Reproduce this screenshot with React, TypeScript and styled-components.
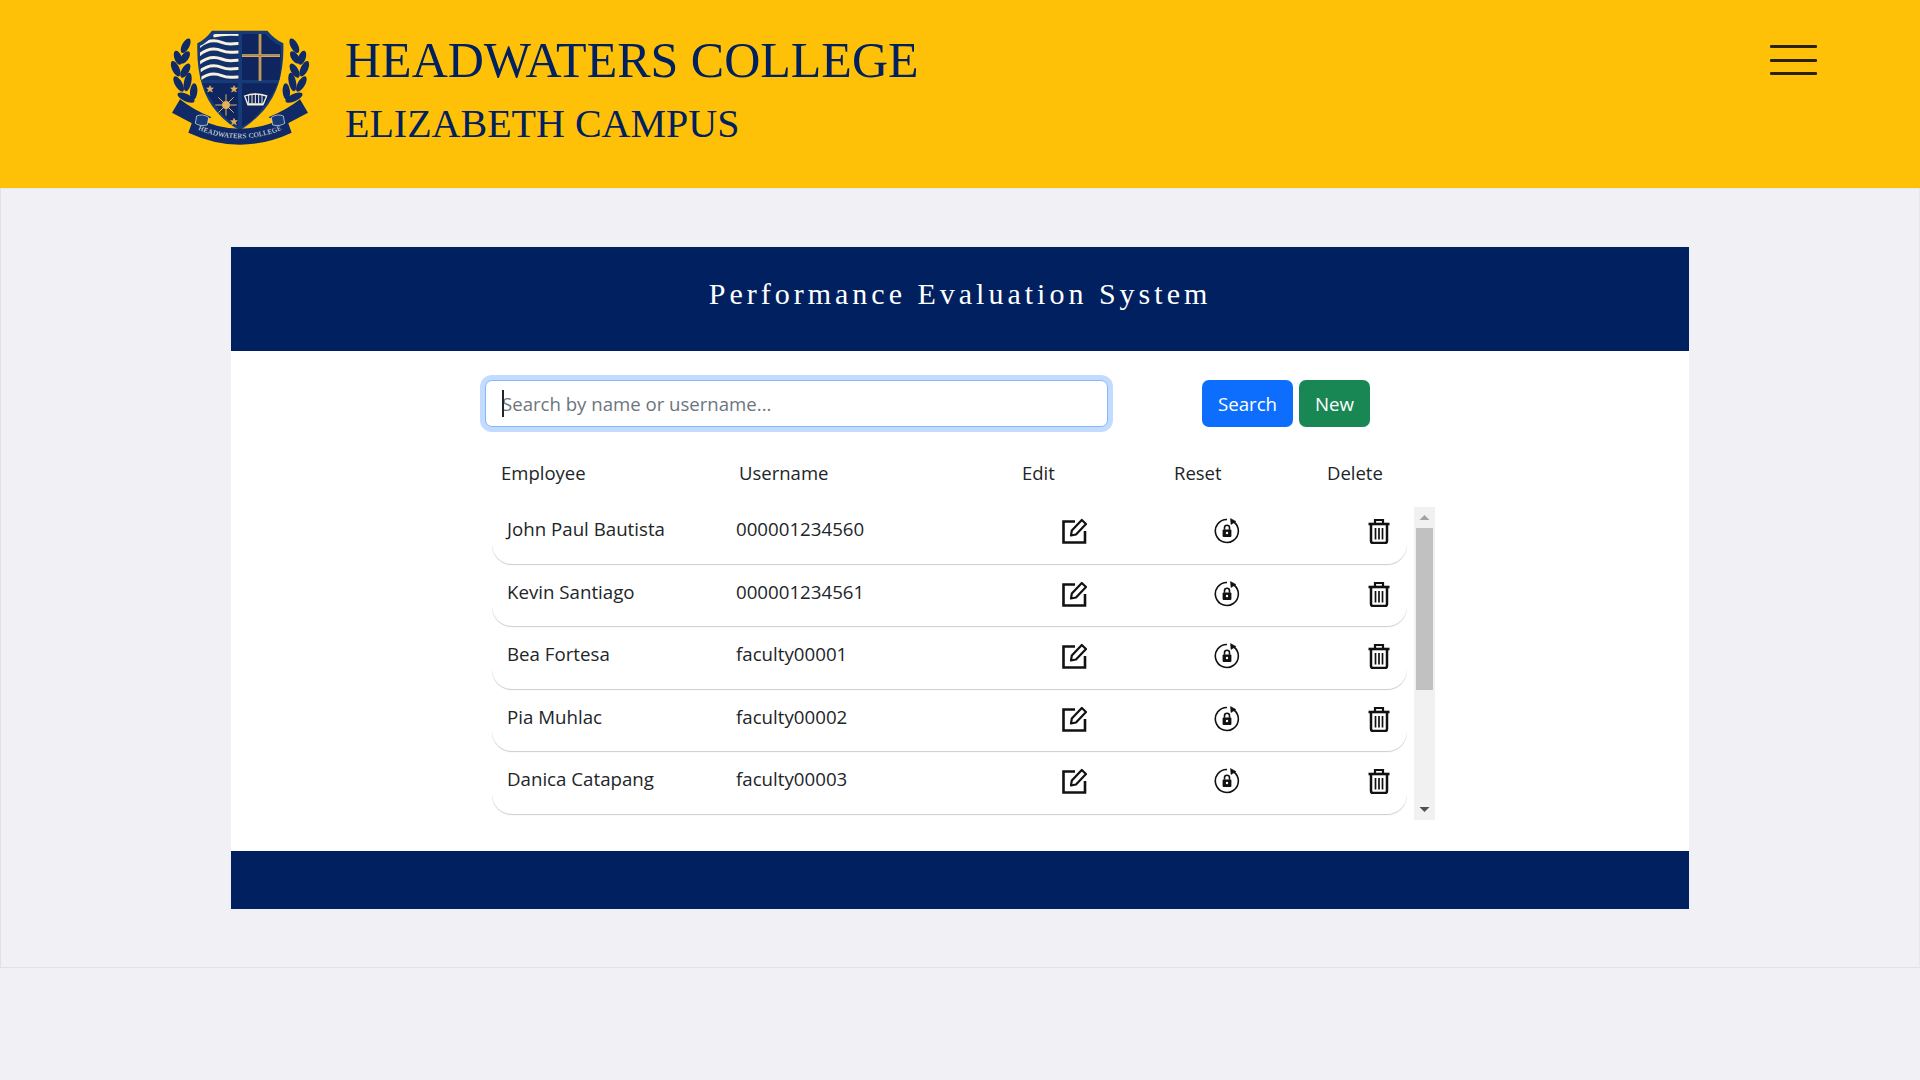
import React from "react";
import styled, { createGlobalStyle } from "styled-components";

const Global = createGlobalStyle`
  html, body { margin: 0; padding: 0; background: #f0f0f5; }
  body { font-family: "Open Sans", "Noto Sans", "Liberation Sans", sans-serif; color: #212529; }
  * { box-sizing: border-box; }
`;

const Page = styled.div`
  width: 100%;
  min-height: 100vh;
  background: #f0f0f5;
`;
const TopBar = styled.header`
  height: 188px;
  background: #ffc107;
  display: flex;
  align-items: flex-start;
  padding: 10px 103px 0 150px;
`;
const Crest = styled.svg`
  width: 180px;
  height: 150px;
  flex: none;
`;
const Titles = styled.div`
  margin-left: 15px;
  flex: 1;
  color: #002060;
  font-family: "Liberation Serif", "Times New Roman", serif;
`;
const CollegeName = styled.h1`
  margin: 22px 0 0;
  font-size: 50px;
  line-height: 56px;
  font-weight: 400;
`;
const CampusName = styled.h2`
  margin: 13px 0 0;
  font-size: 40px;
  line-height: 46px;
  font-weight: 400;
`;
const MenuButton = styled.button`
  border: 0;
  padding: 0;
  margin-top: 35px;
  background: transparent;
  width: 47px;
  height: 30px;
  display: flex;
  flex-direction: column;
  justify-content: space-between;
`;
const MenuLine = styled.span`
  display: block;
  height: 3px;
  background: #111;
  border-radius: 1px;
  opacity: 0.9;
`;
const Main = styled.main`
  height: 780px;
  border: 1px solid #dee2e6;
  border-top-color: #e8e8ec;
  border-right-color: #e8e8ec;
  padding: 58px 230px 0;
`;
const Card = styled.section`
  width: 1458px;
  background: #fff;
`;
const CardHeader = styled.div`
  height: 104px;
  background: #002060;
  color: #fff;
  font-family: "Liberation Serif", "Times New Roman", serif;
  font-size: 30px;
  letter-spacing: 4px;
  text-align: center;
  padding-top: 29px;
  line-height: 36px;
`;
const CardFooter = styled.div`
  height: 58px;
  background: #002060;
`;
const CardBody = styled.div`
  height: 500px;
  padding: 29px 0 0 254px;
`;
const SearchRow = styled.form`
  display: flex;
  align-items: center;
  height: 47px;
  margin: 0;
`;
const SearchField = styled.div`
  position: relative;
  width: 623px;
  height: 47px;
`;
const SearchInput = styled.input`
  width: 100%;
  height: 100%;
  border: 1px solid #86b7fe;
  border-radius: 7px;
  box-shadow: 0 0 0 5px rgba(13, 110, 253, 0.25);
  padding: 0 16px;
  font: inherit;
  font-size: 18.6px;
  color: #212529;
  outline: none;
  caret-color: transparent;
  &::placeholder { color: #6c757d; opacity: 1; }
`;
const Caret = styled.span`
  position: absolute;
  left: 17px;
  top: 10px;
  width: 1.5px;
  height: 27px;
  background: #212529;
`;
const ActionButton = styled.button<{ $variant: "blue" | "green" }>`
  height: 47px;
  border: 0;
  border-radius: 7px;
  padding: 0 15px;
  font: inherit;
  font-size: 18.7px;
  color: #fff;
  background: ${(p) => (p.$variant === "blue" ? "#0d6efd" : "#198754")};
`;
const SearchButton = styled(ActionButton)`
  margin-left: 94px;
  width: 91px;
`;
const NewButton = styled(ActionButton)`
  margin-left: 6px;
  width: 71px;
`;
const HeadRow = styled.div`
  display: grid;
  grid-template-columns: 238px 283px 152px 153px 1fr;
  padding-left: 16px;
  margin-top: 31px;
  height: 30px;
  line-height: 30px;
  font-size: 18.5px;
`;
const TableArea = styled.div`
  display: flex;
  margin: 19px 0 0 7px;
  width: 943px;
  height: 313px;
`;
const Scroller = styled.div`
  width: 915px;
  height: 100%;
  overflow: hidden;
`;
const List = styled.div`
  display: flex;
  flex-direction: column;
  gap: 6px;
  padding-bottom: 29px;
`;
const Scrollbar = styled.div`
  margin-left: 7px;
  width: 21px;
  height: 100%;
  background: #f1f1f1;
  display: flex;
  flex-direction: column;
  align-items: center;
`;
const ScrollArrow = styled.svg`
  flex: none;
  width: 21px;
  height: 21px;
  display: block;
`;
const ScrollTrack = styled.div`
  flex: 1;
  width: 100%;
  padding: 0 2px;
`;
const ScrollThumb = styled.div`
  height: 162px;
  background: #c1c1c1;
`;
const Row = styled.div`
  display: grid;
  grid-template-columns: 244px 262px 152px 154px 1fr;
  align-items: start;
  height: 56.5px;
  background: #fff;
  border-radius: 0 0 20px 20px;
  box-shadow: 0 1px 1px rgba(0, 0, 0, 0.2);
  font-size: 18.7px;
  line-height: 26px;
`;
const NameCell = styled.div`
  padding: 9px 0 0 15px;
`;
const UserCell = styled.div`
  padding-top: 9px;
`;
const IconCell = styled.div<{ $end?: boolean }>`
  display: flex;
  justify-content: ${(p) => (p.$end ? "flex-end" : "center")};
  padding: 11px ${(p) => (p.$end ? "15px" : "0")} 0 0;
`;
const Icon = styled.svg`
  width: 26px;
  height: 26px;
  display: block;
  fill: none;
  stroke: #111;
  stroke-width: 2;
`;

const EditIcon = () => (
  <Icon viewBox="0 0 26 26">
    <path d="M14 3.5H2.5V24.5H24V13" strokeWidth="2.6" />
    <path d="M10 17.5L10.8 12.6L20.8 2L25 6L15 16.5Z" strokeWidth="2.2" strokeLinejoin="round" />
  </Icon>
);
const ResetIcon = () => (
  <Icon viewBox="0 0 26 26">
    <path d="M20 4A11.5 11.5 0 1 1 13 1.5" strokeWidth="1.6" />
    <path d="M16.5 0.5L22 3.5L17 6.5Z" fill="#111" strokeWidth="0.5" />
    <rect x="8.6" y="11.5" width="8.8" height="7.5" rx="1" fill="#111" stroke="none" />
    <path d="M10.5 11.8V9.8a2.5 2.5 0 0 1 5 0V11.8" strokeWidth="1.6" />
    <circle cx="13" cy="15" r="1.2" fill="#fff" stroke="none" />
  </Icon>
);
const TrashIcon = () => (
  <Icon viewBox="0 0 26 26">
    <path d="M2.5 6H23.5" strokeWidth="2.6" />
    <path d="M9 5.5V2H17V5.5" strokeWidth="2.2" />
    <path d="M5 6V23a2 2 0 0 0 2 2H19a2 2 0 0 0 2-2V6" strokeWidth="2.5" />
    <path d="M9.5 10V21.5M13 10V21.5M16.5 10V21.5" strokeWidth="1.7" />
  </Icon>
);

const NAVY = "#12306b";
const CREAM = "#f8f1dc";
const GOLD = "#e3b25a";
const leaves: [number, number, number, number][] = [
  [107, 107, 28, 24], [84, 143, -20, 22], [105, 142, 35, 21], [77, 176, -25, 25],
  [106, 182, 30, 24], [86, 222, -30, 26], [113, 216, 12, 28], [131, 245, 5, 25], [108, 263, -65, 28],
];
const stripes = [85, 110, 135, 160, 185, 210];

const CrestLogo = () => (
  <Crest viewBox="0 0 540 450" role="img" aria-label="Headwaters College crest">
    <defs>
      <clipPath id="quarter"><path d="M192 72H266V212H155Q148 150 150 108Q172 98 192 72Z" /></clipPath>
      <path id="ribbonText" d="M128 352Q270 418 412 352" />
    </defs>
    {leaves.map(([x, y, r, l], i) => (
      <g key={i} fill="#0f2a66">
        <ellipse cx={x} cy={y} rx={11} ry={l} transform={`rotate(${r} ${x} ${y})`} />
        <ellipse cx={540 - x} cy={y} rx={11} ry={l} transform={`rotate(${-r} ${540 - x} ${y})`} />
      </g>
    ))}
    <path d="M186 62H352Q374 88 400 100Q404 230 340 302Q300 345 270 360Q235 345 200 305Q138 235 142 100Q166 88 186 62Z" fill="#173a78" />
    <path d="M192 72H266V210H152Q148 150 150 108Q172 98 192 72Z" fill={NAVY} />
    <path d="M276 72H346Q366 96 392 108Q394 160 388 210H276Z" fill="#0e2560" />
    <path d="M158 220H264V348Q232 335 205 298Q172 260 158 220Z" fill="#0e2560" />
    <path d="M276 220H382Q368 260 335 298Q308 335 276 348Z" fill="#0e2560" />
    <g clipPath="url(#quarter)" stroke={CREAM} strokeWidth="9" fill="none">
      {stripes.map((y) => (
        <path key={y} d={`M146 ${y + 26}C170 ${y + 6} 190 ${y + 2} 215 ${y + 12}S250 ${y + 14} 270 ${y + 16}`} />
      ))}
      <path d="M190 78Q225 70 270 74" />
    </g>
    <path d="M330 72V212M276 137H390" stroke={GOLD} strokeWidth="8" />
    <path d="M330 72V212M276 137H390" stroke="#7d6a52" strokeWidth="2" />
    <g fill={GOLD} stroke={GOLD} strokeWidth="2">
      {[[180, 237], [252, 237], [252, 335]].map(([x, y]) => (
        <path key={`${x}${y}`} d={`M${x} ${y - 10}L${x + 3} ${y - 3}L${x + 10} ${y - 3}L${x + 4} ${y + 2}L${x + 7} ${y + 9}L${x} ${y + 5}L${x - 7} ${y + 9}L${x - 4} ${y + 2}L${x - 10} ${y - 3}L${x - 3} ${y - 3}Z`} />
      ))}
      <circle cx="228" cy="285" r="11" />
      <path d="M228 253V317M196 285H260M205 262L251 308M251 262L205 308" fill="none" strokeWidth="3" />
    </g>
    <g stroke={CREAM} fill="none" strokeWidth="4">
      <path d="M284 258Q315 246 350 258L340 282H293Z" />
      <path d="M296 254V280M306 252V280M316 250V280M326 252V280M336 254V280" strokeWidth="3" />
      <path d="M292 284H340" strokeWidth="5" />
    </g>
    <g fill="#0f2a66">
      <path d="M90 268L66 308L130 342L185 322Q130 300 90 268Z" />
      <path d="M450 268L474 308L410 342L355 322Q410 300 450 268Z" />
      <path d="M132 320Q270 392 408 320L425 368Q270 440 115 368Z" />
    </g>
    <path d="M140 318Q158 310 176 322L172 345Q150 350 136 340Z" fill="#173a78" stroke={CREAM} strokeWidth="2" />
    <path d="M400 318Q382 310 364 322L368 345Q390 350 404 340Z" fill="#173a78" stroke={CREAM} strokeWidth="2" />
    <text fontFamily="'Liberation Serif', serif" fontSize="21" fill="#f4f1e8" letterSpacing="1">
      <textPath href="#ribbonText" startOffset="50%" textAnchor="middle">HEADWATERS COLLEGE</textPath>
    </text>
  </Crest>
);

const employees = [
  ["John Paul Bautista", "000001234560"],
  ["Kevin Santiago", "000001234561"],
  ["Bea Fortesa", "faculty00001"],
  ["Pia Muhlac", "faculty00002"],
  ["Danica Catapang", "faculty00003"],
];

export default function App() {
  return (
    <Page>
      <Global />
      <TopBar>
        <CrestLogo />
        <Titles>
          <CollegeName>HEADWATERS COLLEGE</CollegeName>
          <CampusName>ELIZABETH CAMPUS</CampusName>
        </Titles>
        <MenuButton aria-label="Menu">
          <MenuLine />
          <MenuLine />
          <MenuLine />
        </MenuButton>
      </TopBar>
      <Main>
        <Card>
          <CardHeader>Performance Evaluation System</CardHeader>
          <CardBody>
            <SearchRow onSubmit={(e) => e.preventDefault()}>
              <SearchField>
                <SearchInput placeholder="Search by name or username..." />
                <Caret />
              </SearchField>
              <SearchButton $variant="blue">Search</SearchButton>
              <NewButton $variant="green" type="button">New</NewButton>
            </SearchRow>
            <HeadRow>
              <span>Employee</span>
              <span>Username</span>
              <span>Edit</span>
              <span>Reset</span>
              <span>Delete</span>
            </HeadRow>
            <TableArea>
              <Scroller>
                <List>
                  {employees.map(([name, user]) => (
                    <Row key={user}>
                      <NameCell>{name}</NameCell>
                      <UserCell>{user}</UserCell>
                      <IconCell><EditIcon /></IconCell>
                      <IconCell><ResetIcon /></IconCell>
                      <IconCell $end><TrashIcon /></IconCell>
                    </Row>
                  ))}
                </List>
              </Scroller>
              <Scrollbar>
                <ScrollArrow viewBox="0 0 21 21"><path d="M5.5 13L10.5 8L15.5 13Z" fill="#a3a3a3" /></ScrollArrow>
                <ScrollTrack><ScrollThumb /></ScrollTrack>
                <ScrollArrow viewBox="0 0 21 21"><path d="M5.5 8L10.5 13L15.5 8Z" fill="#505050" /></ScrollArrow>
              </Scrollbar>
            </TableArea>
          </CardBody>
          <CardFooter />
        </Card>
      </Main>
    </Page>
  );
}
